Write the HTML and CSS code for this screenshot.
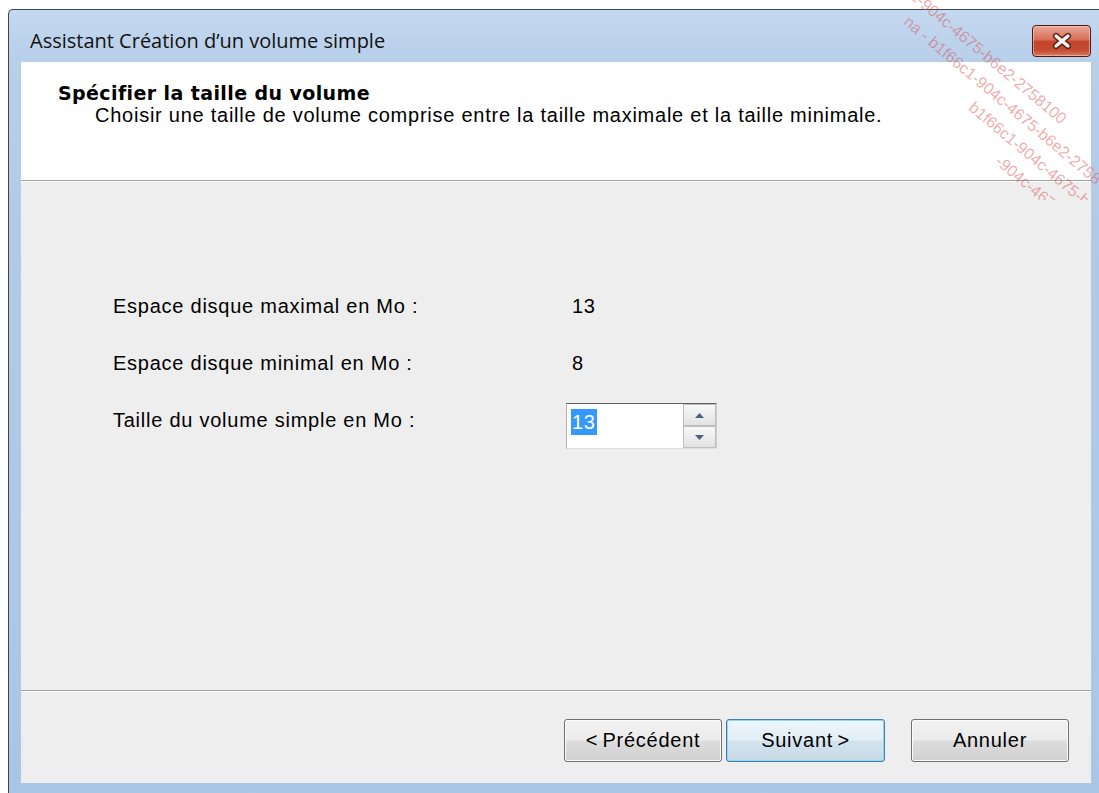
FILE: index.html
```html
<!DOCTYPE html>
<html lang="fr">
<head>
<meta charset="utf-8">
<title>Assistant Création d’un volume simple</title>
<link rel="stylesheet" href="styles.css">
</head>
<body>
<div class="window">
  <div class="titlebar">
    <span class="title">Assistant Création d’un volume simple</span>
    <button class="close" aria-label="Fermer">
      <svg width="22" height="18" viewBox="0 0 22 18">
        <path d="M5 4 L17 14 M17 4 L5 14" stroke="#5a2418" stroke-width="6.2" stroke-linecap="round" fill="none"/>
        <path d="M5 4 L17 14 M17 4 L5 14" stroke="#fbf4f2" stroke-width="3.4" stroke-linecap="round" fill="none"/>
      </svg>
    </button>
  </div>
  <div class="client">
    <header class="header">
      <h1>Spécifier la taille du volume</h1>
      <p>Choisir une taille de volume comprise entre la taille maximale et la taille minimale.</p>
    </header>
    <main class="body">
      <div class="row">
        <span class="label">Espace disque maximal en Mo :</span>
        <span class="value">13</span>
      </div>
      <div class="row">
        <span class="label">Espace disque minimal en Mo :</span>
        <span class="value">8</span>
      </div>
      <div class="row row-spin">
        <label class="label" for="size">Taille du volume simple en Mo :</label>
        <div class="spin" id="size">
          <div class="spin-field"><span class="sel">13</span></div>
          <div class="spin-btns">
            <span class="spin-btn">
              <svg width="9" height="5" viewBox="0 0 9 5"><path d="M0 5 L4.5 0 L9 5 Z" fill="#4e5f80"/></svg>
            </span>
            <span class="spin-btn">
              <svg width="9" height="5" viewBox="0 0 9 5"><path d="M0 0 L4.5 5 L9 0 Z" fill="#4e5f80"/></svg>
            </span>
          </div>
        </div>
      </div>
    </main>
    <footer class="footer">
      <button class="btn">&lt; Précédent</button>
      <button class="btn btn-default">Suivant &gt;</button>
      <button class="btn btn-cancel">Annuler</button>
    </footer>
  </div>
</div>
<div class="watermark" aria-hidden="true">
  <div class="watermark-text">
    <div class="wm-line wm-a">c1-904c-4675-b6e2-2758100</div>
    <div class="wm-line wm-b">na - b1f66c1-904c-4675-b6e2-2758</div>
    <div class="wm-line wm-c">b1f66c1-904c-4675-b6e2-27</div>
    <div class="wm-line wm-d">-904c-4675</div>
  </div>
</div>
</body>
</html>
```
FILE: styles.css
```css
* { box-sizing: border-box; }

html, body { margin: 0; }

body {
  width: 1099px;
  height: 793px;
  overflow: hidden;
  position: relative;
  background: #fff;
  font-family: "Liberation Sans", Arial, sans-serif;
}

/* Aero window frame */
.window {
  margin: 9px 0 0 8px;
  width: 1098px;
  height: 800px;
  border-left: 1px solid #3b4552;
  border-top: 1px solid #3b4552;
  border-top-left-radius: 5px;
  background: linear-gradient(180deg, #c4d8ef 0, #b8cfea 52px, #b2cae7 220px, #a9c6e7 100%);
  padding: 0 15px 0 12px;
}

.titlebar {
  height: 52px;
  display: flex;
  justify-content: space-between;
  align-items: flex-start;
  padding-left: 9px;
}

.title {
  padding-top: 19px;
  font: 20px/24px "Open Sans", "Noto Sans", sans-serif;
  color: #111;
}

.close {
  margin-top: 15px;
  width: 59px;
  height: 32px;
  padding: 0;
  border: 1px solid #4b1a12;
  border-radius: 4px;
  background: linear-gradient(180deg, #eaa899 0%, #d96f59 45%, #c5432b 52%, #c44b31 80%, #d87a60 100%);
  box-shadow: inset 0 0 0 1px rgba(255, 215, 205, 0.55);
  display: flex;
  align-items: center;
  justify-content: center;
}

/* Dialog client area */
.client {
  height: 721px;
  display: flex;
  flex-direction: column;
  background: #eeeeee;
}

.header {
  flex: none;
  height: 119px;
  background: #fff;
  border-bottom: 1px solid #a0a0a0;
  padding: 20px 0 0 37px;
}

.header h1 {
  margin: 0;
  font: bold 19px/22px "DejaVu Sans", sans-serif;
  letter-spacing: 0.4px;
  color: #000;
}

.header p {
  margin: 0 0 0 37px;
  font: 20px/23px "Liberation Sans", Arial, sans-serif;
  letter-spacing: 0.75px;
  color: #000;
}

.body {
  flex: 1;
  border-top: 1px solid #fff;
  padding: 113px 0 0 92px;
}

.row {
  display: flex;
  align-items: flex-start;
  font-size: 20px;
  line-height: 23px;
  letter-spacing: 0.75px;
  color: #000;
}

.row + .row { margin-top: 34px; }
.row.row-spin { margin-top: 28px; }

.label { width: 453px; }
.value { padding-left: 6px; }
.row-spin .label { margin-top: 6px; }

/* Numeric up/down */
.spin {
  display: flex;
  width: 151px;
  height: 46px;
  border: 1px solid;
  border-color: #5f5f5f #cfcfcf #e0e0e0 #b3b3b3;
  background: #fff;
}

.spin-field {
  flex: 1;
  padding: 5px 0 0 4px;
}

.sel {
  display: inline-block;
  background: #3399ff;
  color: #fff;
  line-height: 26px;
  padding: 0 1px;
}

.spin-btns {
  width: 33px;
  display: flex;
  flex-direction: column;
}

.spin-btn {
  flex: 1;
  display: flex;
  align-items: center;
  justify-content: center;
  background: linear-gradient(180deg, #f8f8f8, #e2e2e2);
  border: 1px solid #bdbdbd;
}

/* Command buttons */
.footer {
  flex: none;
  height: 93px;
  border-top: 1px solid #a0a0a0;
  box-shadow: inset 0 1px 0 #fff;
  display: flex;
  justify-content: flex-end;
  align-items: flex-start;
  padding: 28px 22px 0 0;
}

.btn {
  width: 158px;
  height: 43px;
  padding: 0;
  border: 1px solid #707070;
  border-radius: 3px;
  background: linear-gradient(180deg, #f2f2f2 0%, #ebebeb 48%, #dddddd 52%, #cfcfcf 100%);
  box-shadow: inset 0 0 0 1px #fbfbfb;
  font: 20px "Liberation Sans", Arial, sans-serif;
  letter-spacing: 0.75px;
  word-spacing: -2px;
  color: #000;
}

.btn-default {
  width: 159px;
  margin-left: 4px;
  border-color: #3c7fb1;
  background: linear-gradient(180deg, #eef6fb 0%, #e2eef6 48%, #d2e3ee 52%, #c6d9e6 100%);
  box-shadow: inset 0 0 0 1px #92d6f2;
}

.btn-cancel { margin-left: 26px; }

/* Diagonal licence stamp over the top-right corner */
.watermark {
  position: absolute;
  top: 0;
  right: 0;
  width: 200px;
  height: 200px;
  overflow: hidden;
  pointer-events: none;
}

.watermark-text {
  position: absolute;
  left: 30px;
  top: -8px;
  transform-origin: 0 0;
  transform: rotate(40deg);
  font: 16px/24px "Liberation Sans", Arial, sans-serif;
  color: rgba(218, 78, 78, 0.48);
  white-space: nowrap;
}

.wm-a { margin-left: -20px; }
.wm-c { padding-left: 105px; }
.wm-d { padding-left: 160px; }
```
